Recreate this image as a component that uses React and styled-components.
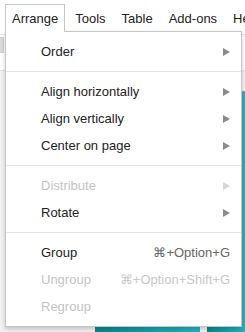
import React from "react";
import styled, { createGlobalStyle } from "styled-components";

const Global = createGlobalStyle`
  html, body { margin: 0; padding: 0; background: #fff; }
  body { font-family: "Liberation Sans", Arial, sans-serif; overflow: hidden; }
  * { box-sizing: border-box; }
`;

const Page = styled.div`
  position: relative;
  width: 245px;
  height: 332px;
  overflow: hidden;
  display: flex;
  flex-direction: column;
  background: #f1f1f1;
`;

const MenuBar = styled.div`
  display: flex;
  align-items: flex-start;
  height: 35px;
  padding: 4px 0 0 5px;
  background: #fff;
  border-bottom: 1px solid #e5e5e5;
  white-space: nowrap;
  overflow: hidden;
`;

const BarItem = styled.div`
  position: relative;
  z-index: ${(p) => (p.$open ? 3 : 0)};
  height: 28px;
  padding: 0 ${(p) => (p.$open ? 6 : 7)}px 0 ${(p) => (p.$open ? 6 : 7)}px;
  line-height: 27px;
  font-size: 13px;
  color: #222;
  background: ${(p) => (p.$open ? "#fff" : "transparent")};
  border: 1px solid ${(p) => (p.$open ? "#c6c6c6" : "transparent")};
  border-bottom: none;
  margin-right: ${(p) => (p.$open ? 2 : 0)}px;
`;

const Toolbar = styled.div`
  display: flex;
  align-items: flex-start;
  height: 36px;
  padding-top: 2px;
  background: #fff;
  border-bottom: 1px solid #e0e0e0;
`;

const ToolButton = styled.div`
  width: 4px;
  height: 16px;
  background: #dadada;
  border: 1px solid #cfcfcf;
  border-left: none;
`;

const Canvas = styled.div`
  flex: 1;
  display: flex;
  gap: 7px;
  padding: 20px 0 0 95px;
  background: #f1f1f1;
`;

const Slide = styled.div`
  flex: ${(p) => (p.$w ? `0 0 ${p.$w}px` : "1")};
  border-top: 2px solid #5b9bd5;
  background: linear-gradient(90deg, #0b858c 0%, #14a3b2 60%, #1fb5c5 100%);
`;

const Menu = styled.div`
  position: absolute;
  z-index: 2;
  top: 31px;
  left: 5px;
  width: 237px;
  padding: 6px 0;
  background: #fff;
  border: 1px solid #c6c6c6;
  box-shadow: 0 2px 4px rgba(0, 0, 0, 0.2);
  font-size: 13px;
`;

const Item = styled.div`
  display: flex;
  align-items: center;
  height: 27px;
  padding: 0 11px 0 35px;
  color: ${(p) => (p.$disabled ? "#c4c4c4" : "#222")};
  white-space: nowrap;
`;

const Label = styled.span`
  flex: 1;
`;

const Shortcut = styled.span`
  color: ${(p) => (p.$disabled ? "#c8c8c8" : "#666")};
`;

const Arrow = styled.span`
  width: 0;
  height: 0;
  border-top: 4px solid transparent;
  border-bottom: 4px solid transparent;
  border-left: 7px solid ${(p) => (p.$disabled ? "#d6d6d6" : "#8c8c8c")};
`;

const Separator = styled.div`
  height: 1px;
  margin: 6px 0;
  background: #e5e5e5;
`;

const groups = [
  [{ label: "Order", sub: true }],
  [
    { label: "Align horizontally", sub: true },
    { label: "Align vertically", sub: true },
    { label: "Center on page", sub: true },
  ],
  [
    { label: "Distribute", sub: true, disabled: true },
    { label: "Rotate", sub: true },
  ],
  [
    { label: "Group", shortcut: "⌘+Option+G" },
    { label: "Ungroup", shortcut: "⌘+Option+Shift+G", disabled: true },
    { label: "Regroup", disabled: true },
  ],
];

export default function App() {
  return (
    <Page>
      <Global />
      <MenuBar>
        <BarItem $open>Arrange</BarItem>
        <BarItem>Tools</BarItem>
        <BarItem>Table</BarItem>
        <BarItem>Add-ons</BarItem>
        <BarItem>Help</BarItem>
      </MenuBar>
      <Toolbar>
        <ToolButton />
      </Toolbar>
      <Canvas>
        <Slide $w={105} />
        <Slide />
      </Canvas>
      <Menu>
        {groups.map((g, gi) => (
          <React.Fragment key={gi}>
            {gi > 0 && <Separator />}
            {g.map((it) => (
              <Item key={it.label} $disabled={it.disabled}>
                <Label>{it.label}</Label>
                {it.shortcut && (
                  <Shortcut $disabled={it.disabled}>{it.shortcut}</Shortcut>
                )}
                {it.sub && <Arrow $disabled={it.disabled} />}
              </Item>
            ))}
          </React.Fragment>
        ))}
      </Menu>
    </Page>
  );
}
